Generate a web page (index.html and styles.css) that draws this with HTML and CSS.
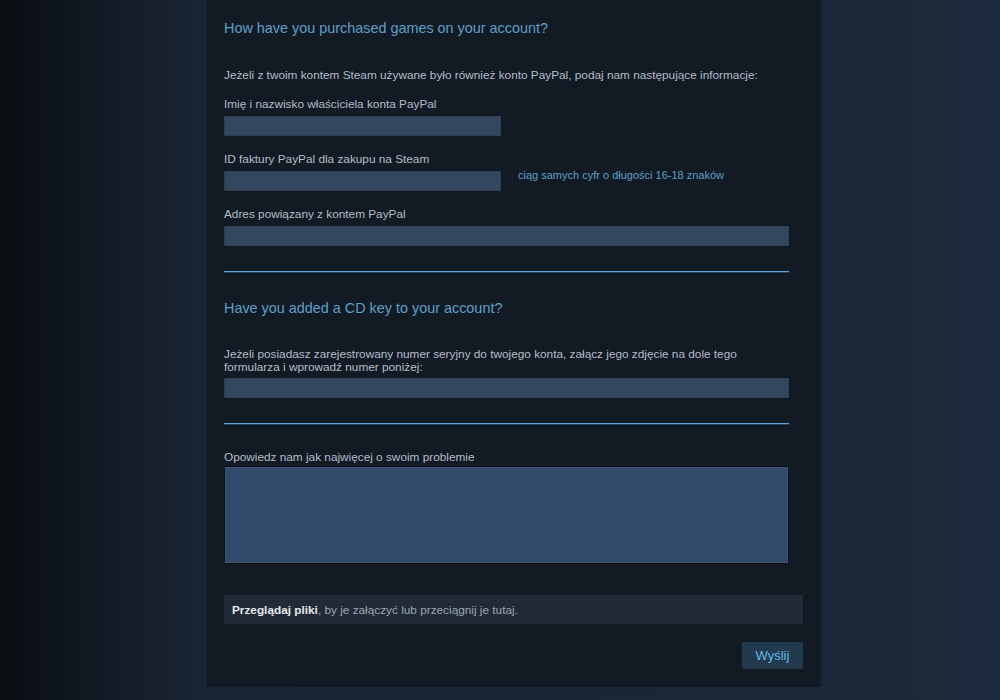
FILE: index.html
```html
<!DOCTYPE html>
<html lang="pl">
<head>
<meta charset="utf-8">
<title>Steam Support</title>
<link rel="stylesheet" href="styles.css">
</head>
<body>
<div class="page">
  <div class="panel">
    <h2 class="heading">How have you purchased games on your account?</h2>
    <p class="intro">Jeżeli z twoim kontem Steam używane było również konto PayPal, podaj nam następujące informacje:</p>

    <label class="label first">Imię i nazwisko właściciela konta PayPal</label>
    <div class="field"><input class="input short" type="text"></div>

    <label class="label">ID faktury PayPal dla zakupu na Steam</label>
    <div class="field"><input class="input short" type="text"><span class="hint">ciąg samych cyfr o długości 16-18 znaków</span></div>

    <label class="label">Adres powiązany z kontem PayPal</label>
    <div class="field"><input class="input" type="text"></div>

    <div class="sep"></div>

    <h2 class="heading h2">Have you added a CD key to your account?</h2>
    <p class="desc">Jeżeli posiadasz zarejestrowany numer seryjny do twojego konta, załącz jego zdjęcie na dole tego formularza i wprowadź numer poniżej:</p>
    <div class="field"><input class="input" type="text"></div>

    <div class="sep"></div>

    <label class="label story">Opowiedz nam jak najwięcej o swoim problemie</label>
    <textarea class="textarea"></textarea>

    <div class="upload"><b>Przeglądaj pliki</b>, by je załączyć lub przeciągnij je tutaj.</div>

    <div class="actions"><button class="btn" type="button">Wyślij</button></div>
  </div>
</div>
</body>
</html>
```

FILE: styles.css
```css
html, body {
  margin: 0;
  padding: 0;
  height: 100%;
}
body {
  background: linear-gradient(to right, #0a0e13 0%, #141c27 12%, #1a2534 20%, #1b2737 82%, #1d2b3e 100%);
  font-family: "Liberation Sans", Arial, sans-serif;
  overflow: hidden;
}
.page {
  display: flex;
  padding-left: 207px;
}
.panel {
  width: 579px;
  background: #121a24;
  padding: 18px 17px 18px 17px;
  display: flex;
  flex-direction: column;
  box-shadow: 2px 0 0 #152030;
}
.heading {
  margin: 0;
  font-size: 14.4px;
  line-height: 20px;
  font-weight: normal;
  color: #5ea0c8;
}
.h2 {
  margin-top: 25px;
}
.intro {
  margin: 29px 0 0;
  font-size: 11.8px;
  line-height: 16px;
  color: #b4bec8;
}
.label {
  display: block;
  margin-top: 15px;
  font-size: 11.8px;
  line-height: 16px;
  color: #b4bec8;
}
.label.first {
  margin-top: 13px;
}
.label.story {
  margin-top: 24px;
}
.field {
  display: flex;
  align-items: center;
  margin-top: 4px;
}
.input {
  box-sizing: border-box;
  width: 565px;
  height: 20px;
  margin: 0;
  border: 1px solid #2b3d52;
  background: #33475f;
  outline: none;
}
.input.short {
  width: 277px;
}
.hint {
  margin-left: 17px;
  margin-top: -12px;
  font-size: 11px;
  line-height: 14px;
  color: #5ea0c8;
}
.sep {
  width: 565px;
  height: 1px;
  margin-top: 25px;
  background: #67a6d2;
  border-bottom: 1px solid #24405a;
}
.desc {
  margin: 30px 0 0;
  width: 565px;
  font-size: 11.8px;
  line-height: 13px;
  color: #b4bec8;
}
.textarea {
  box-sizing: border-box;
  display: block;
  width: 565px;
  height: 98px;
  margin: 1px 0 0;
  border: 1px solid #0b1119;
  box-shadow: inset 0 0 0 1px #3d5674;
  background: #324a69;
  resize: none;
  outline: none;
}
.upload {
  box-sizing: border-box;
  margin-top: 31px;
  height: 29px;
  padding: 0 8px;
  display: flex;
  align-items: center;
  background: #212a36;
  font-size: 11.8px;
  color: #9ba6b2;
}
.upload b {
  color: #e4e8ec;
  font-weight: bold;
}
.actions {
  display: flex;
  justify-content: flex-end;
  margin-top: 18px;
}
.btn {
  width: 61px;
  height: 27px;
  padding: 0;
  border: none;
  border-radius: 2px;
  background: #213a4e;
  color: #66b7e6;
  font-family: "Liberation Sans", Arial, sans-serif;
  font-size: 13px;
}
```
